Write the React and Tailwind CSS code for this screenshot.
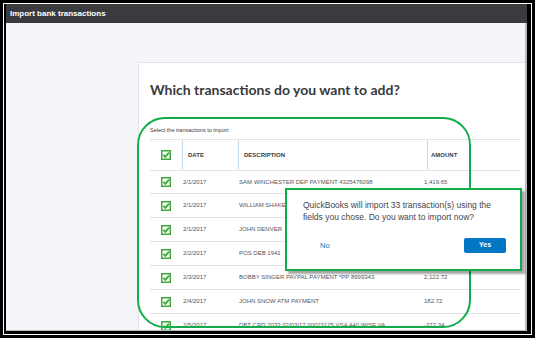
import React from "react";

const Check = () => (
  <svg width="10" height="10" viewBox="0 0 10 10" className="block">
    <rect x="0.75" y="0.75" width="8.5" height="8.5" fill="#fff" stroke="#3aa93a" strokeWidth="1.5" />
    <path d="M2.4 4.9 L4.3 6.9 L7.9 2.7" fill="none" stroke="#3aa93a" strokeWidth="1.8" />
  </svg>
);

const rows = [
  ["2/1/2017", "SAM WINCHESTER DEP PAYMENT 4325476098", "1,419.65"],
  ["2/1/2017", "WILLIAM SHAKESPEARE", ""],
  ["2/1/2017", "JOHN DENVER", ""],
  ["2/2/2017", "POS DEB 1941", ""],
  ["2/3/2017", "BOBBY SINGER PAYPAL PAYMENT *PP 8999343", "2,122.72"],
  ["2/4/2017", "JOHN SNOW ATM PAYMENT", "182.72"],
  ["2/5/2017", "DBT CRD 2033 02/03/17 00023125 VSA 440 WISE VA", "-377.34"],
];

export default function App() {
  return (
    <div className="relative w-[535px] h-[338px] bg-black p-[3px] overflow-hidden" style={{ fontFamily: '"Liberation Sans", Arial, sans-serif' }}>
      <div className="h-full border border-white bg-black">
        <div className="h-full flex flex-col pl-[2px] pr-[4px] pb-[3px]">
          <div className="h-[19px] bg-[#3a3b3f] flex items-center pl-[4px]">
            <span className="text-white font-bold text-[8px] leading-none">Import bank transactions</span>
          </div>
          <div className="flex-1 min-h-0 bg-[#f4f5f8] border-r-2 border-b border-[#b9babd] flex flex-col overflow-hidden">
            <div className="ml-[132px] mt-[39px] flex-1 bg-white border-l border-t border-[#e1e3e6] pl-[11px] pt-[17px]">
              <h1 className="text-[14px] leading-[20px] font-bold text-[#393a3d]" style={{ fontFamily: 'Lato, "Liberation Sans", sans-serif' }}>
                Which transactions do you want to add?
              </h1>
              <div className="mt-[26px] text-[5.5px] leading-[8px] text-[#393a3d]">Select the transactions to import</div>
              <div className="mt-[5px] w-[370px] border-t border-[#e2e3e5]">
                <div className="grid grid-cols-[32px_56px_189px_1fr] h-[31px] border-b border-[#e2e3e5]">
                  <div className="flex items-center justify-center"><Check /></div>
                  <div className="border-l border-[#c9d9ee] flex items-center pl-[5px] text-[6px] font-bold text-[#393a3d]">DATE</div>
                  <div className="border-l border-[#c9d9ee] flex items-center pl-[5px] text-[6px] font-bold text-[#393a3d]">DESCRIPTION</div>
                  <div className="border-l border-[#c9d9ee] flex items-center pl-[3px] text-[6px] font-bold text-[#393a3d]">AMOUNT</div>
                </div>
                {rows.map((r, i) => (
                  <div key={i} className={`grid grid-cols-[32px_56px_186px_1fr] border-b border-[#e2e3e5] text-[6px] text-[#55565b] ${i === 0 ? "h-[23px]" : "h-[24px]"}`}>
                    <div className="flex items-center justify-center"><Check /></div>
                    <div className="flex items-center pl-[1px]">{r[0]}</div>
                    <div className="flex items-center pl-[1px] whitespace-nowrap overflow-hidden">{r[1]}</div>
                    <div className="flex items-center">{r[2]}</div>
                  </div>
                ))}
              </div>
            </div>
          </div>
        </div>
      </div>

      <div className="absolute left-[137px] top-[117px] w-[334px] h-[211px] border-2 border-[#12ad4b] rounded-[28px]" />

      <div className="absolute left-[285px] top-[188px] w-[237px] h-[83px] border-2 border-[#12ad4b] bg-white shadow-[3px_3px_2px_rgba(0,0,0,0.35)] flex flex-col">
        <div className="pl-[16px] pt-[10px] text-[8.5px] leading-[11.6px] text-[#45464a]">
          QuickBooks will import 33 transaction(s) using the<br />fields you chose. Do you want to import now?
        </div>
        <div className="mt-[15px] flex items-center justify-between pl-[33px] pr-[14px]">
          <span className="text-[7.5px] text-[#0077c5]">No</span>
          <div className="w-[42px] h-[15px] bg-[#0077c5] rounded-[2px] flex items-center justify-center text-white text-[7px] font-bold">Yes</div>
        </div>
      </div>
    </div>
  );
}
